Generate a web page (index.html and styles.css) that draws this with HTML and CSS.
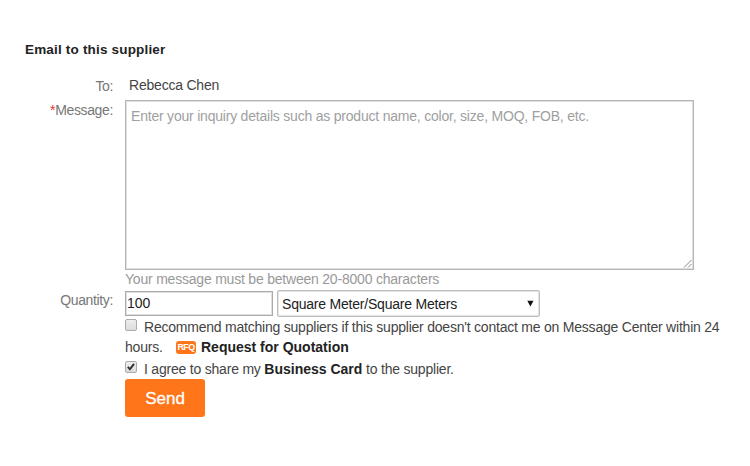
FILE: index.html
```
<!DOCTYPE html>
<html lang="en">
<head>
<meta charset="utf-8">
<title>Email to this supplier</title>
<link rel="stylesheet" href="styles.css">
</head>
<body>
<form class="inquiry">
  <h1 class="title"><span>Email to this supplier</span></h1>
  <div class="row row-to"><label class="label">To:</label><span class="recipient">Rebecca Chen</span></div>
  <div class="row row-message">
    <label class="label"><span class="required">*</span>Message:</label>
    <div class="field">
      <div class="textarea"><span class="placeholder">Enter your inquiry details such as product name, color, size, MOQ, FOB, etc.</span>
        <svg class="grip" width="9" height="9" viewBox="0 0 9 9"><path d="M1 8.5 8.5 1M5 8.5 8.5 5" stroke="#888" fill="none"/></svg>
      </div>
      <div class="hint"><span>Your message must be between 20-8000 characters</span></div>
    </div>
  </div>
  <div class="row row-quantity">
    <label class="label">Quantity:</label>
    <div class="field amounts">
      <div class="input"><span>100</span></div>
      <div class="select"><span>Square Meter/Square Meters</span><svg width="7" height="7" viewBox="0 0 7 7"><path d="M.3.7h6.2L3.4 6.5z" fill="#111"/></svg></div>
    </div>
  </div>
  <div class="options">
    <div class="option"><i class="check"></i><span class="recommend">Recommend matching suppliers if this supplier doesn't contact me on Message Center within 24</span></div>
    <div class="option option-rfq"><span class="hours">hours.</span><span class="rfq"><span>RFQ</span></span><b class="quotation">Request for Quotation</b></div>
    <div class="option option-agree"><i class="check"><svg width="10" height="10" viewBox="0 0 11 11"><path d="M2 5.4 4.3 8 8.8 2" stroke="#333" stroke-width="2.2" fill="none"/></svg></i><span class="agree">I agree to share my <b>Business Card</b> to the supplier.</span></div>
    <button type="button" class="send">Send</button>
  </div>
</form>
</body>
</html>
```

FILE: styles.css
```
* { box-sizing: border-box; }
body { margin: 0; background: #fff; color: #444; font: 14px/20px "Liberation Sans", Arial, sans-serif; letter-spacing: -.21px; }
.inquiry { width: 750px; height: 466px; padding: 40px 0 0 25px; white-space: nowrap; }
.title { margin: 0; height: 35px; font-size: 13.5px; line-height: 20px; color: #222; letter-spacing: .18px; }
.row { display: grid; grid-template-columns: 88px 1fr; column-gap: 12px; }
.label { text-align: right; color: #777; letter-spacing: -.36px; }
.required { color: #e33; }
.row-to { height: 25px; line-height: 22px; }
.recipient { padding-left: 4px; line-height: 20px; }
.row-message { height: 189px; }
.textarea { position: relative; width: 569px; height: 170px; border: 1px solid #b4b4b4; box-shadow: inset 0 0 0 1px #e0e0e0; padding: 5px; color: #a0a0a0; line-height: 20px; }
.grip { position: absolute; right: 1px; bottom: 1px; }
.hint { color: #999; line-height: 19px; }
.row-quantity { height: 27px; }
.row-quantity .label { line-height: 22px; }
.amounts { display: flex; gap: 4px; color: #222; }
.input { width: 148px; height: 25px; margin-top: 2px; border: 1px solid #aaa; box-shadow: inset 0 0 0 1px #e0e0e0; padding: 1px 1px; letter-spacing: 0; }
.select { display: flex; width: 263px; height: 27px; margin-top: 1px; border: 1px solid #bdbdbd; box-shadow: inset 0 0 0 1px #e4e4e4; border-radius: 2px; padding: 0 5px 0 4px; align-items: center; justify-content: space-between; }
.options { padding: 1px 0 0 100px; }
.option { display: flex; height: 20px; line-height: 20px; }
.recommend { letter-spacing: -.22px; }
.check { flex: none; width: 12px; height: 12px; margin: 2px 7px 0 0; border: 1px solid #aaa; border-radius: 2px; background: linear-gradient(#eee, #dcdcdc); }
.check svg { display: block; }
.option-rfq { height: 22px; }
.hours { width: 51px; }
.rfq { display: flex; align-items: center; justify-content: center; width: 20px; height: 13px; margin: 4px 5px 0 0; background: #ff7519; border-radius: 3px; color: #fff; font-size: 9px; font-weight: bold; line-height: 13px; letter-spacing: -.7px; }
.quotation, .agree b { color: #222; letter-spacing: 0; }
.send { display: block; width: 80px; height: 38px; margin: 0; padding: 0; border: 0; border-radius: 3px; background: #ff7519; color: #fff; font: 17px/39px "Liberation Sans", Arial, sans-serif; -webkit-text-stroke: .3px #fff; }
```
